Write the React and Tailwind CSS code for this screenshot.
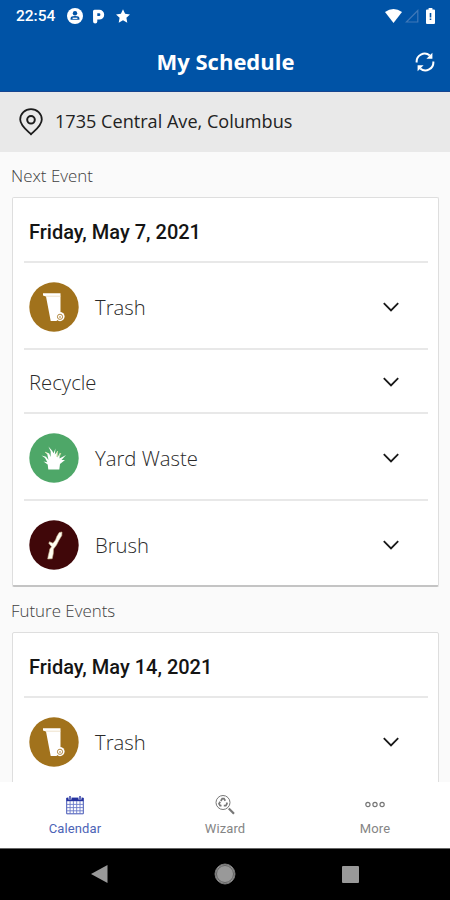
import React from "react";

function StatusBar() {
  return (
    <div className="flex h-8 items-center pl-4 pr-[15px] text-white">
      <span className="w-[39px] whitespace-nowrap font-['Roboto',sans-serif] text-[15.5px] font-medium leading-8">22:54</span>
      <svg className="ml-3 size-4 shrink-0" viewBox="0 0 16 16">
        <circle cx="8" cy="8" r="8" fill="#fff" />
        <circle cx="8" cy="5.2" r="2.2" fill="#0053a6" />
        <path d="M3.6 11.8V10.4Q3.6 8 8 8T12.4 10.4V11.8Z" fill="#0053a6" />
        <path d="M5.6 10.3h4.8" stroke="#fff" strokeWidth="1.2" />
      </svg>
      <svg className="ml-[10px] h-[15px] w-3 shrink-0" viewBox="0 0 12 15">
        <path d="M0 2.3Q0 .8 1.5.8H6.3a4.9 4.9 0 0 1 0 9.8H4.3V12.4a2.1 2.1 0 0 1-4.2 0Z" fill="#fff" />
        <path d="M4.3 4.3H6a1.4 1.4 0 0 1 0 2.8H4.3Z" fill="#0053a6" />
      </svg>
      <svg className="ml-[11px] size-[14px] shrink-0" viewBox="0 0 14 14">
        <path d="M7 .3 9.1 4.8 14 5.4 10.4 8.8 11.3 13.7 7 11.3 2.7 13.7 3.6 8.8 0 5.4 4.9 4.8Z" fill="#fff" />
      </svg>
      <div className="ml-auto flex items-center">
        <svg className="h-[14px] w-[17px]" viewBox="0 0 17 14">
          <path d="M0 3Q8.5-3 17 3L8.5 14Z" fill="#fff" />
        </svg>
        <svg className="ml-[3px] h-[14px] w-[14px]" viewBox="0 0 14 14">
          <path d="M12.8 1.5V13H1.3Z" fill="none" stroke="#3f78b8" strokeWidth="1.2" />
        </svg>
        <svg className="ml-[7px] h-4 w-[9px]" viewBox="0 0 9 16">
          <path d="M2.6 0h3.8v1.5H8q1 0 1 1V15q0 1-1 1H1q-1 0-1-1V2.5q0-1 1-1h1.6Z" fill="#fff" />
          <path d="M3.7 5h1.6v4.5H3.7ZM3.7 10.5h1.6V12H3.7Z" fill="#0053a6" />
        </svg>
      </div>
    </div>
  );
}

function Chevron() {
  return (
    <svg className="ml-auto mr-[29px] h-[10px] w-[16px]" viewBox="0 0 16 10" fill="none" stroke="#181818" strokeWidth="1.8">
      <path d="M.8 1.2 8 8.5 15.2 1.2" />
    </svg>
  );
}

function TrashIcon() {
  return (
    <svg className="size-[50px]" viewBox="0 0 50 50">
      <circle cx="25" cy="25" r="24.7" fill="#a1721c" />
      <path d="M14 11.2H31.5V33.5L27.5 39H21.7L17 14.4 14 13.4Z" fill="#fff" />
      <path d="M16.8 14.2H31.5" stroke="#ead9bb" strokeWidth=".8" />
      <circle cx="31" cy="34.6" r="4.6" fill="#fff" />
      <circle cx="31" cy="34.8" r="2.6" fill="none" stroke="#b58c46" strokeWidth="1" />
      <circle cx="31" cy="35" r=".8" fill="#a1721c" />
    </svg>
  );
}

function YardIcon() {
  return (
    <svg className="size-[50px]" viewBox="0 0 50 50">
      <circle cx="25" cy="25" r="24.7" fill="#4ea768" />
      <path
        d="M19.3 36.5 18.7 31.5 14.5 28.5 18.3 29.2 16 25 12.5 22.5 17 23.8 19.5 27 18.2 21 16 18.8 20.2 20.5 21.6 24 21.7 18.5 19.4 13.5 23.2 17.8 24.5 20.2 26.5 15.5 25.8 21.5 28 19 28.5 24.5 31 19.5 30.5 25.5 37 22 32.5 27 36 27 31 31 30.3 36.5Z"
        fill="#fff"
      />
      <path d="M28.5 18 27.8 24M16 19 18.4 21M31.8 20 30.5 23" stroke="#d7e4a9" strokeWidth="1" />
    </svg>
  );
}

function BrushIcon() {
  return (
    <svg className="size-[50px]" viewBox="0 0 50 50">
      <circle cx="25" cy="25" r="24.7" fill="#400709" />
      <path
        d="M30.2 12.5 33 12 32.8 15.5 29.8 20.5 27.5 25 24.5 29 24.3 33.5 23.2 38.7 18.7 39 19.2 36 20.3 31.5 20.8 29 22.6 26.7 19.8 23.3 20.5 21.7 24 23.2 26.5 20 27.8 16.5Z"
        fill="#fffdf2"
        stroke="#c8b48f"
        strokeWidth=".6"
      />
    </svg>
  );
}

function EventRow({ label, icon, height, divider = true }) {
  return (
    <div className={`ml-[11px] mr-[10px] flex shrink-0 items-center pl-[5px] pt-[2px] ${height} ${divider ? "border-b-2 border-[#e8e8e8]" : ""}`}>
      {icon && <div className="mr-4 shrink-0">{icon}</div>}
      <span className="font-['Open_Sans',sans-serif] text-[20.3px] font-light leading-6 text-[#2a2a2a]">{label}</span>
      <Chevron />
    </div>
  );
}

function DateRow({ children }) {
  return (
    <div className="ml-[11px] mr-[10px] flex h-[65px] items-center border-b-2 border-[#e8e8e8] pl-[5px] pt-[5px] font-['Roboto',sans-serif] text-[20px] font-medium text-[#141414]">
      {children}
    </div>
  );
}

function SectionLabel({ children }) {
  return (
    <div className="flex h-[45px] shrink-0 items-center pl-[11px] pt-[3px] font-['Open_Sans',sans-serif] text-[16.9px] font-light text-[#404040]">
      {children}
    </div>
  );
}

function CalendarIcon() {
  return (
    <svg className="h-[20px] w-[18px]" viewBox="0 0 18 20">
      <path d="M.7 3H17.3V18.8H.7Z" fill="#fff" stroke="#4355b5" strokeWidth="1" />
      <path d="M.5 3H17.5V6.2H.5Z" fill="#26339f" />
      <path d="M4.1 6V19M7.4 6V19M10.7 6V19M14 6V19M1 9.4H17M1 12.6H17M1 15.8H17" stroke="#6c7bc9" strokeWidth=".9" />
      <path d="M4 1V4.5M14 1V4.5" stroke="#fff" strokeWidth="3" />
      <path d="M4 1V4.5M14 1V4.5" stroke="#26339f" strokeWidth="1.4" />
    </svg>
  );
}

function WizardIcon() {
  return (
    <svg className="size-[20px]" viewBox="0 0 20 20" fill="none" stroke="#777">
      <circle cx="8" cy="7.5" r="7" strokeWidth="1" />
      <path d="M5.8 6 7.2 3.7H9L10.3 5.7M11.5 7.5 12 8.7 10.8 10.7H8.8M6.5 10.7H5.2L4 8.7 5.2 6.7" strokeWidth="1.7" />
      <path d="M13.8 13.5 19 18.7" strokeWidth="2.2" />
    </svg>
  );
}

function MoreIcon() {
  return (
    <svg className="h-[20px] w-[20px]" viewBox="0 0 20 20" fill="none" stroke="#777" strokeWidth="1.2">
      <circle cx="2.9" cy="9.5" r="2.1" />
      <circle cx="10" cy="9.5" r="2.1" />
      <circle cx="17.1" cy="9.5" r="2.1" />
    </svg>
  );
}

function Tab({ icon, label, color }) {
  return (
    <div className={`flex flex-1 flex-col items-center pt-[13px] font-['Roboto',sans-serif] text-[13px] leading-4 tracking-[0.1px] ${color}`}>
      {icon}
      <span className="mt-[6px]">{label}</span>
    </div>
  );
}

export default function App() {
  return (
    <div className="flex h-[900px] w-[450px] flex-col overflow-hidden bg-[#fafafa]">
      <header className="h-[92px] shrink-0 border-b border-[#17458f] bg-[#0053a6]">
        <StatusBar />
        <div className="grid h-[60px] grid-cols-[1fr_auto_1fr] items-center pr-[15px] text-white">
          <span />
          <h1 className="pb-[2px] pl-4 font-['Open_Sans',sans-serif] text-[22px] font-bold">My Schedule</h1>
          <svg className="h-5 w-5 justify-self-end" viewBox="0 0 20 20" fill="none" stroke="#fff" strokeWidth="2">
            <path d="M1.7 10.5A8 8 0 0 1 14.8 3.5M18.3 9.5A8 8 0 0 1 5.2 16.5" />
            <path d="M17.4.8V6.8H11.4ZM2.6 19.2V13.2H8.6Z" fill="#fff" stroke="none" />
          </svg>
        </div>
      </header>
      <div className="flex h-[60px] shrink-0 items-center bg-[#e9e9e9] pl-[19px]">
        <svg className="h-[28px] w-[24px]" viewBox="0 0 24 28" fill="none" stroke="#1c1c1c">
          <path d="M12 26.3C8 22.5 1.2 17.5 1.2 11.5a10.8 10.3 0 0 1 21.6 0C22.8 17.5 16 22.5 12 26.3Z" strokeWidth="1.8" />
          <circle cx="12" cy="11.8" r="3.8" strokeWidth="2" />
        </svg>
        <span className="ml-3 pb-px font-['Open_Sans',sans-serif] text-[18.1px] text-[#222]">1735 Central Ave, Columbus</span>
      </div>
      <main className="flex min-h-0 flex-1 flex-col overflow-hidden">
        <SectionLabel>Next Event</SectionLabel>
        <section className="ml-3 mr-[11px] h-[390px] shrink-0 rounded-[2px] border border-b-2 border-[#dedede] border-b-[#c4c4c4] bg-white">
          <DateRow>Friday, May 7, 2021</DateRow>
          <EventRow label="Trash" icon={<TrashIcon />} height="h-[87px]" />
          <EventRow label="Recycle" height="h-16" />
          <EventRow label="Yard Waste" icon={<YardIcon />} height="h-[87px]" />
          <EventRow label="Brush" icon={<BrushIcon />} height="h-[86px]" divider={false} />
        </section>
        <SectionLabel>Future Events</SectionLabel>
        <section className="ml-3 mr-[11px] h-[390px] shrink-0 rounded-[2px] border border-[#dedede] bg-white">
          <DateRow>Friday, May 14, 2021</DateRow>
          <EventRow label="Trash" icon={<TrashIcon />} height="h-[87px]" />
        </section>
      </main>
      <nav className="flex h-[66px] shrink-0 bg-white">
        <Tab icon={<CalendarIcon />} label="Calendar" color="text-[#4c63b6]" />
        <Tab icon={<WizardIcon />} label="Wizard" color="text-[#858585]" />
        <Tab icon={<MoreIcon />} label="More" color="text-[#858585]" />
      </nav>
      <footer className="flex h-[52px] shrink-0 items-center justify-between border-t border-[#666] bg-black px-[91px] pb-px">
        <svg className="h-[20px] w-[17px]" viewBox="0 0 17 20">
          <path d="M0 10 16.5 1V19Z" fill="#999" />
        </svg>
        <svg className="size-[22px]" viewBox="0 0 22 22">
          <circle cx="11" cy="11" r="10" fill="#999" stroke="#777" />
          <circle cx="11" cy="11" r="8.5" fill="#999" stroke="#555" strokeWidth=".8" />
        </svg>
        <span className="size-[17px] rounded-[1px] bg-[#999]" />
      </footer>
    </div>
  );
}
